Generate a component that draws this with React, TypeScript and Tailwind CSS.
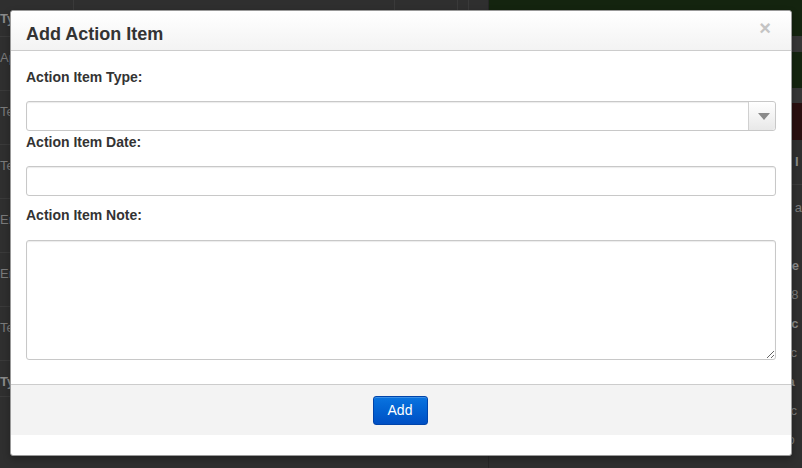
import React from 'react';

const leftRows = [
  { text: 'Ap', h: 'h-[54px]', bold: false },
  { text: 'Te', h: 'h-[54px]', bold: false },
  { text: 'Te', h: 'h-[54px]', bold: false },
  { text: 'Er', h: 'h-[54px]', bold: false },
  { text: 'Er', h: 'h-[54px]', bold: false },
  { text: 'Te', h: 'h-[54px]', bold: false },
  { text: 'Ty', h: 'h-[36px]', bold: true },
];

const sideLines = [
  { text: 'n a', bold: false },
  { text: 'il', bold: true },
  { text: 'ne', bold: true },
  { text: '78', bold: false },
  { text: 'sc', bold: true },
  { text: 'sc', bold: false },
  { text: 'la', bold: true },
  { text: 'sc', bold: false },
  { text: 'to', bold: false },
];

function Backdrop() {
  return (
    <div className="flex h-full w-full bg-[#2f2f2f] text-[13px] text-[#7a7a7a]">
      <div className="w-[491px] flex flex-col">
        <div className="h-[37px] flex border-b border-[#3a3a3a]">
          <div className="w-[74px] border-r border-[#3a3a3a] pt-[9px] font-bold text-[#8a8a8a]">Ty</div>
          <div className="w-[321px] border-r border-[#3a3a3a]"></div>
          <div className="w-[63px] border-r border-[#3a3a3a]"></div>
          <div className="w-[11px] border-r border-[#3a3a3a]"></div>
        </div>
        {leftRows.map((r, i) => (
          <div key={i} className={`${r.h} border-b border-[#3a3a3a] pt-[11px] ${r.bold ? 'font-bold text-[#8a8a8a]' : ''}`}>
            {r.text}
          </div>
        ))}
      </div>
      <div className="flex-1 flex flex-col border-l border-[#262626]">
        <div className="h-[36px] bg-[#14240f]"></div>
        <div className="h-[16px] bg-[#363636]"></div>
        <div className="h-[36px] bg-[#14240f]"></div>
        <div className="h-[15px] bg-[#363636]"></div>
        <div className="h-[37px] bg-[#2a0f0f]"></div>
        <div className="h-[45px] border-b border-[#3a3a3a] flex items-center pl-[306px] font-bold text-[#8a8a8a]">I</div>
        <div className="flex flex-col pl-[295px] pt-[8px] leading-[29px] text-[#7a7a7a] whitespace-nowrap">
          {sideLines.map((s, i) => (
            <div key={i} className={s.bold ? 'font-bold text-[#8a8a8a]' : ''}>{s.text}</div>
          ))}
        </div>
      </div>
    </div>
  );
}

export default function App() {
  return (
    <div className="relative w-[802px] h-[468px] overflow-hidden" style={{ fontFamily: '"Liberation Sans", Arial, Helvetica, sans-serif' }}>
      <Backdrop />

      <div className="absolute left-[10px] top-[10px] w-[782px] h-[446px] bg-white border border-[#999] rounded-[3px] shadow-[0_3px_7px_rgba(0,0,0,0.3)] flex flex-col">
        <div className="h-[40px] flex items-center justify-between pl-[15px] pr-[20px] border-b border-[#cccccc] bg-gradient-to-b from-white to-[#f3f3f3] rounded-t-[3px]">
          <h3 className="text-[18px] font-bold text-[#333] pt-[7px]">Add Action Item</h3>
          <span className="text-[20px] font-bold leading-none text-[#c4c4c4] -mt-[6px]">×</span>
        </div>

        <div className="flex flex-col px-[15px] pt-[15px] h-[333px]">
          <label className="block text-[14px] font-bold text-[#333] leading-[20px] pt-[1px]">Action Item Type:</label>
          <div className="mt-[14px] h-[30px] flex border border-[#c8c8c8] rounded-[3px] bg-white shadow-[inset_0_1px_1px_rgba(0,0,0,0.08)]">
            <div className="flex-1"></div>
            <div className="w-[27px] border-l border-[#d0d0d0] bg-gradient-to-b from-white to-[#e8e8e8] rounded-r-[3px] flex items-center justify-center">
              <svg width="12" height="7" viewBox="0 0 12 7" className="ml-[3px]">
                <path d="M0 0 L12 0 L6 7 Z" fill="#8a8a8a" />
              </svg>
            </div>
          </div>

          <label className="block text-[14px] font-bold text-[#333] leading-[20px] mt-[1px]">Action Item Date:</label>
          <input type="text" className="mt-[14px] h-[30px] w-full border border-[#c8c8c8] rounded-[3px] bg-white shadow-[inset_0_1px_1px_rgba(0,0,0,0.08)] outline-none px-[6px]" />

          <label className="block text-[14px] font-bold text-[#333] leading-[20px] mt-[9px]">Action Item Note:</label>
          <textarea className="mt-[15px] h-[120px] w-full border border-[#c8c8c8] rounded-[3px] bg-white shadow-[inset_0_1px_1px_rgba(0,0,0,0.08)] outline-none px-[6px] py-[4px]"></textarea>
        </div>

        <div className="h-[51px] border-t border-[#cccccc] bg-[#f3f3f3] flex items-center justify-center">
          <button className="w-[55px] h-[29px] -ml-[2px] rounded-[3px] border border-[#0044aa] bg-gradient-to-b from-[#0a74e0] to-[#004fc4] text-white text-[14px] shadow-[inset_0_1px_0_rgba(255,255,255,0.2)]">
            Add
          </button>
        </div>
      </div>
    </div>
  );
}
